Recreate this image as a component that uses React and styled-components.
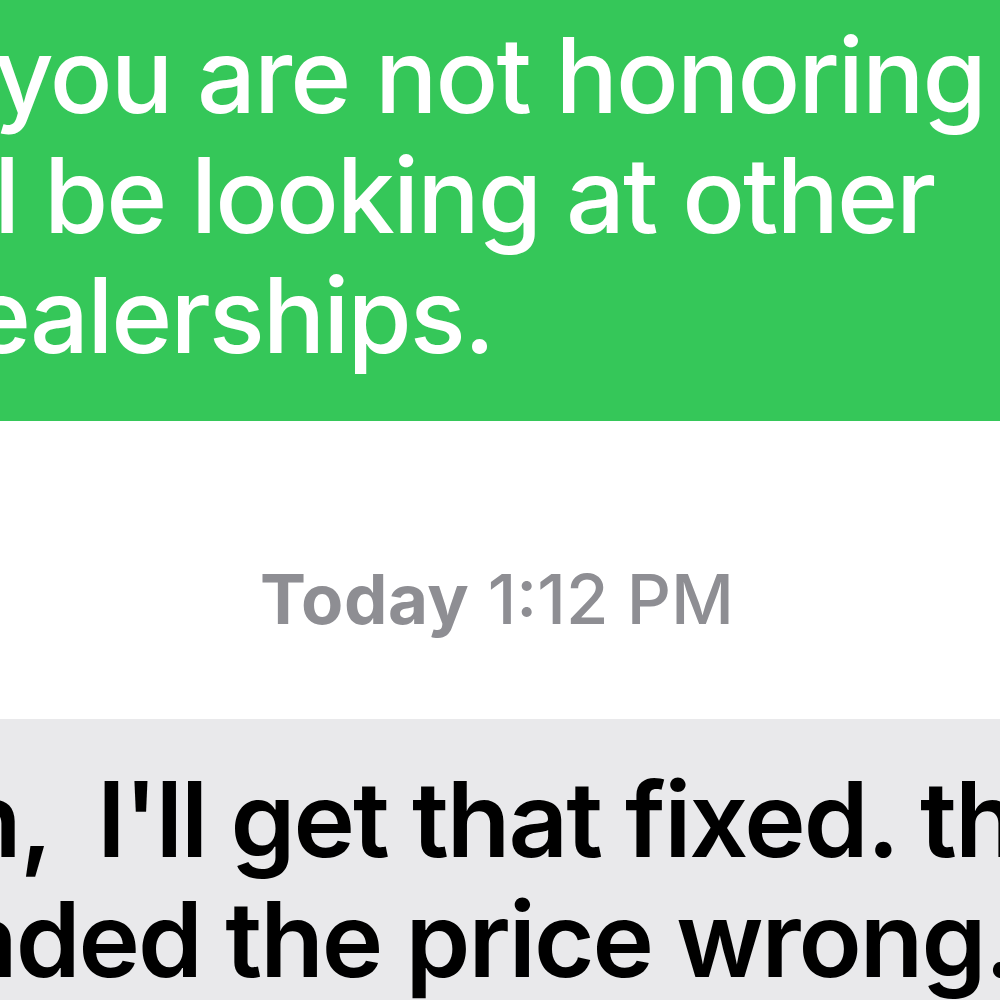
import React from "react";
import styled, { createGlobalStyle } from "styled-components";

const Global = createGlobalStyle`
  html, body { margin: 0; padding: 0; background: #ffffff; }
  body { font-family: Inter, "Noto Sans", "Liberation Sans", sans-serif; }
`;

const Page = styled.div`
  width: 1000px;
  height: 1000px;
  overflow: hidden;
  background: #ffffff;
  display: flex;
  flex-direction: column;
`;

const Bubble = styled.div`
  display: flex;
  flex-direction: column;
  background: ${(p) => (p.$sent ? "#35c759" : "#e9e9eb")};
  color: ${(p) => (p.$sent ? "#ffffff" : "#000000")};
  padding: ${(p) => (p.$sent ? "15px 0 46px" : "40px 0 0")};
  font-size: 104px;
  line-height: 120px;
  font-weight: ${(p) => (p.$sent ? 500 : 600)};
  letter-spacing: -2px;
  white-space: pre;
  flex: ${(p) => (p.$sent ? "0 0 auto" : "1 1 auto")};
`;

const Line = styled.div`
  margin-left: ${(p) => p.$offset}px;
`;

const Stamp = styled.div`
  margin: 144px 0 85px;
  text-align: center;
  font-size: 69px;
  line-height: 69px;
  color: #8e8e93;
  font-weight: 500;
  white-space: nowrap;
  padding-right: 6px;
`;

const Day = styled.span`
  font-weight: 700;
  letter-spacing: 0.5px;
`;

export default function App() {
  return (
    <Page>
      <Global />
      <Bubble $sent>
        <Line $offset={-6}>you are not honoring</Line>
        <Line $offset={-6}>l be looking at other</Line>
        <Line $offset={-30}>ealerships.</Line>
      </Bubble>
      <Stamp>
        <Day>Today</Day> 1:12 PM
      </Stamp>
      <Bubble>
        <Line $offset={-42}>{"h,  I'll get that fixed. th"}</Line>
        <Line $offset={-42}>aded the price wrong.</Line>
      </Bubble>
    </Page>
  );
}
